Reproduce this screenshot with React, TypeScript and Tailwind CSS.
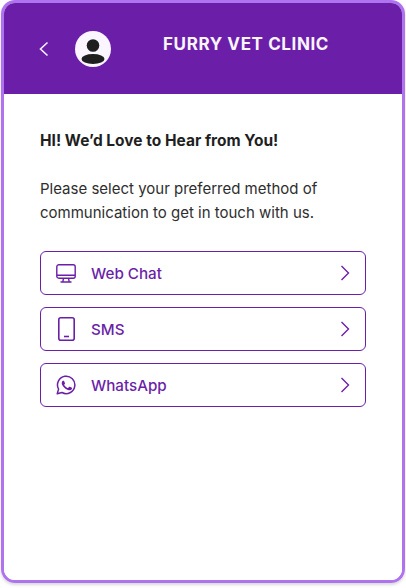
import React from 'react';

const channels = [
  { label: 'Web Chat', icon: 'monitor' },
  { label: 'SMS', icon: 'phone' },
  { label: 'WhatsApp', icon: 'whatsapp' },
];

const ChannelIcon = ({ icon }: { icon: string }) => {
  if (icon === 'monitor') {
    return (
      <svg width="20" height="19" viewBox="0 0 20 19" fill="none" stroke="#6b1fa8" strokeWidth="1.4" strokeLinejoin="round">
        <rect x="0.8" y="0.8" width="18.400" height="13.400" rx="2" />
        <path d="M1 11.200h18M7.500 14.200l-.6 3.200M12.500 14.200l.6 3.200M4.500 18h11" />
      </svg>
    );
  }
  if (icon === 'phone') {
    return (
      <svg width="17" height="24" viewBox="0 0 17 24" fill="none" stroke="#6b1fa8" strokeWidth="1.6">
        <rect x="0.8" y="0.8" width="15.400" height="22.400" rx="2" />
        <path d="M6 19.500h5" />
      </svg>
    );
  }
  return (
    <svg width="20" height="20" viewBox="0 0 24 24" fill="none" stroke="#6b1fa8" strokeWidth="1.8" strokeLinejoin="round">
      <path d="M1.500 22.500l1.600-5.600A10.400 10.400 0 1 1 7.200 21z" />
      <path
        fill="#6b1fa8"
        stroke="none"
        d="M8.900 6.800c-.3 0-.7.1-1 .5-.4.5-1 1.200-1 2.600 0 1.500 1.100 3 1.300 3.200.2.2 2.100 3.300 5.200 4.500 2.500 1 3.100.8 3.600.7.600-.1 1.800-.7 2-1.400.3-.7.3-1.300.2-1.400-.1-.1-.3-.2-.6-.4l-2.100-1c-.3-.1-.5-.2-.7.1l-1 1.200c-.2.2-.4.3-.7.1-.3-.1-1.300-.5-2.500-1.500-.9-.8-1.500-1.800-1.700-2.100-.2-.3 0-.5.1-.6l.5-.5.3-.5c.1-.2.1-.4 0-.5l-1-2.300c-.2-.6-.5-.6-.7-.6z"
      />
    </svg>
  );
};

export default function App() {
  return (
    <div className="w-[406px] h-[588px] bg-white font-['Inter',sans-serif]">
      <div className="ml-px w-[404px] h-[583px] border-[3px] border-[#b073f0] rounded-[14px] overflow-hidden shadow-[0_2px_3px_rgba(0,0,0,0.15)] flex flex-col">
        <header className="h-[91px] bg-[#6b1fa8] flex pl-[33px] pr-[73px] shrink-0">
          <div className="flex items-center gap-[24px] h-full">
            <svg width="14" height="16" viewBox="0 0 14 16" fill="none" stroke="#f7effd" strokeWidth="1.6">
              <path d="M10.500 1.500L3.500 8l7 6.500" />
            </svg>
            <div className="w-9 h-9 rounded-full bg-[#faf5ff] overflow-hidden">
              <svg width="36" height="36" viewBox="0 0 36 36" fill="#1f1f1f">
                <circle cx="18" cy="14.500" r="6.300" />
                <ellipse cx="18" cy="28" rx="11.500" ry="5" />
              </svg>
            </div>
          </div>
          <h1 className="ml-auto mt-[31px] text-[17px] leading-5 font-bold tracking-[0.6px] text-[#faf5ff]">FURRY VET CLINIC</h1>
        </header>
        <main className="flex-1 bg-white pt-[36px] pl-[36px] pr-[36px]">
          <h2 className="text-[15.500px] leading-[22px] font-bold text-[#1f1f1f]">HI! We’d Love to Hear from You!</h2>
          <p className="mt-[25px] text-[15px] leading-[24px] text-[#2e2e2e]">
            Please select your preferred method of communication to get in touch with us.
          </p>
          <ul className="mt-[26px] flex flex-col gap-3">
            {channels.map((c) => (
              <li
                key={c.label}
                className="h-11 border border-[#6b1fa8] rounded-[6px] flex items-center pr-[15px] text-[#6b1fa8]"
              >
                <span className="w-[50px] flex justify-center">
                  <ChannelIcon icon={c.icon} />
                </span>
                <span className="pt-[2px] text-[15.200px] font-medium">{c.label}</span>
                <svg className="ml-auto" width="10" height="16" viewBox="0 0 10 16" fill="none" stroke="#6b1fa8" strokeWidth="1.4">
                  <path d="M1.500 1l7 7-7 7" />
                </svg>
              </li>
            ))}
          </ul>
        </main>
      </div>
    </div>
  );
}
